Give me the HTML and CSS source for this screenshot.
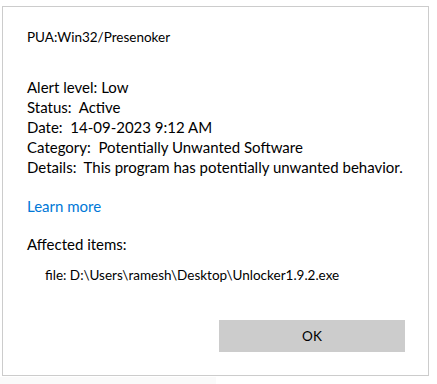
FILE: index.html
```html
<!DOCTYPE html>
<html>
<head>
<meta charset="utf-8">
<link rel="stylesheet" href="styles.css">
</head>
<body>
<div class="dialog">
  <div class="title">PUA:Win32/Presenoker</div>
  <div class="info">
    <div>Alert level: Low</div>
    <div>Status:&nbsp; Active</div>
    <div>Date:&nbsp; 14-09-2023 9:12 AM</div>
    <div>Category:&nbsp; Potentially Unwanted Software</div>
    <div>Details:&nbsp; This program has potentially unwanted behavior.</div>
  </div>
  <a class="link" href="#">Learn more</a>
  <div class="affected">Affected items:</div>
  <div class="file">file: D:\Users\ramesh\Desktop\Unlocker1.9.2.exe</div>
  <div class="actions"><button class="ok">OK</button></div>
</div>
<div class="strip"></div>
</body>
</html>
```
FILE: styles.css
```css
html, body {
  margin: 0;
  padding: 0;
  background: #ffffff;
}
body {
  width: 437px;
  height: 384px;
  overflow: hidden;
  font-family: "Lato", "Open Sans", sans-serif;
  font-size: 15px;
  color: #000;
}
.dialog {
  box-sizing: border-box;
  margin: 6px 0 0 2px;
  width: 427px;
  height: 370px;
  border: 1px solid #cccccc;
  padding: 0 0 0 24px;
  display: flex;
  flex-direction: column;
}
.title {
  margin-top: 20px;
  line-height: 20px;
  font-size: 13.5px;
}
.info {
  margin-top: 30px;
  line-height: 20px;
}
.link {
  margin-top: 19px;
  line-height: 20px;
  color: #0078d7;
  text-decoration: none;
  align-self: flex-start;
}
.affected {
  margin-top: 18px;
  line-height: 20px;
}
.file {
  margin-top: 11px;
  padding-left: 18px;
  line-height: 20px;
  font-size: 13.5px;
}
.actions {
  margin-top: auto;
  margin-bottom: 23px;
  display: flex;
  justify-content: flex-end;
  padding-right: 23px;
}
.ok {
  width: 186px;
  height: 32px;
  border: none;
  background: #cccccc;
  font-family: inherit;
  font-size: 13.5px;
  color: #000;
  padding: 0;
}
.strip {
  width: 216px;
  height: 8px;
  margin-top: 1px;
  background: #fafafa;
}
```
